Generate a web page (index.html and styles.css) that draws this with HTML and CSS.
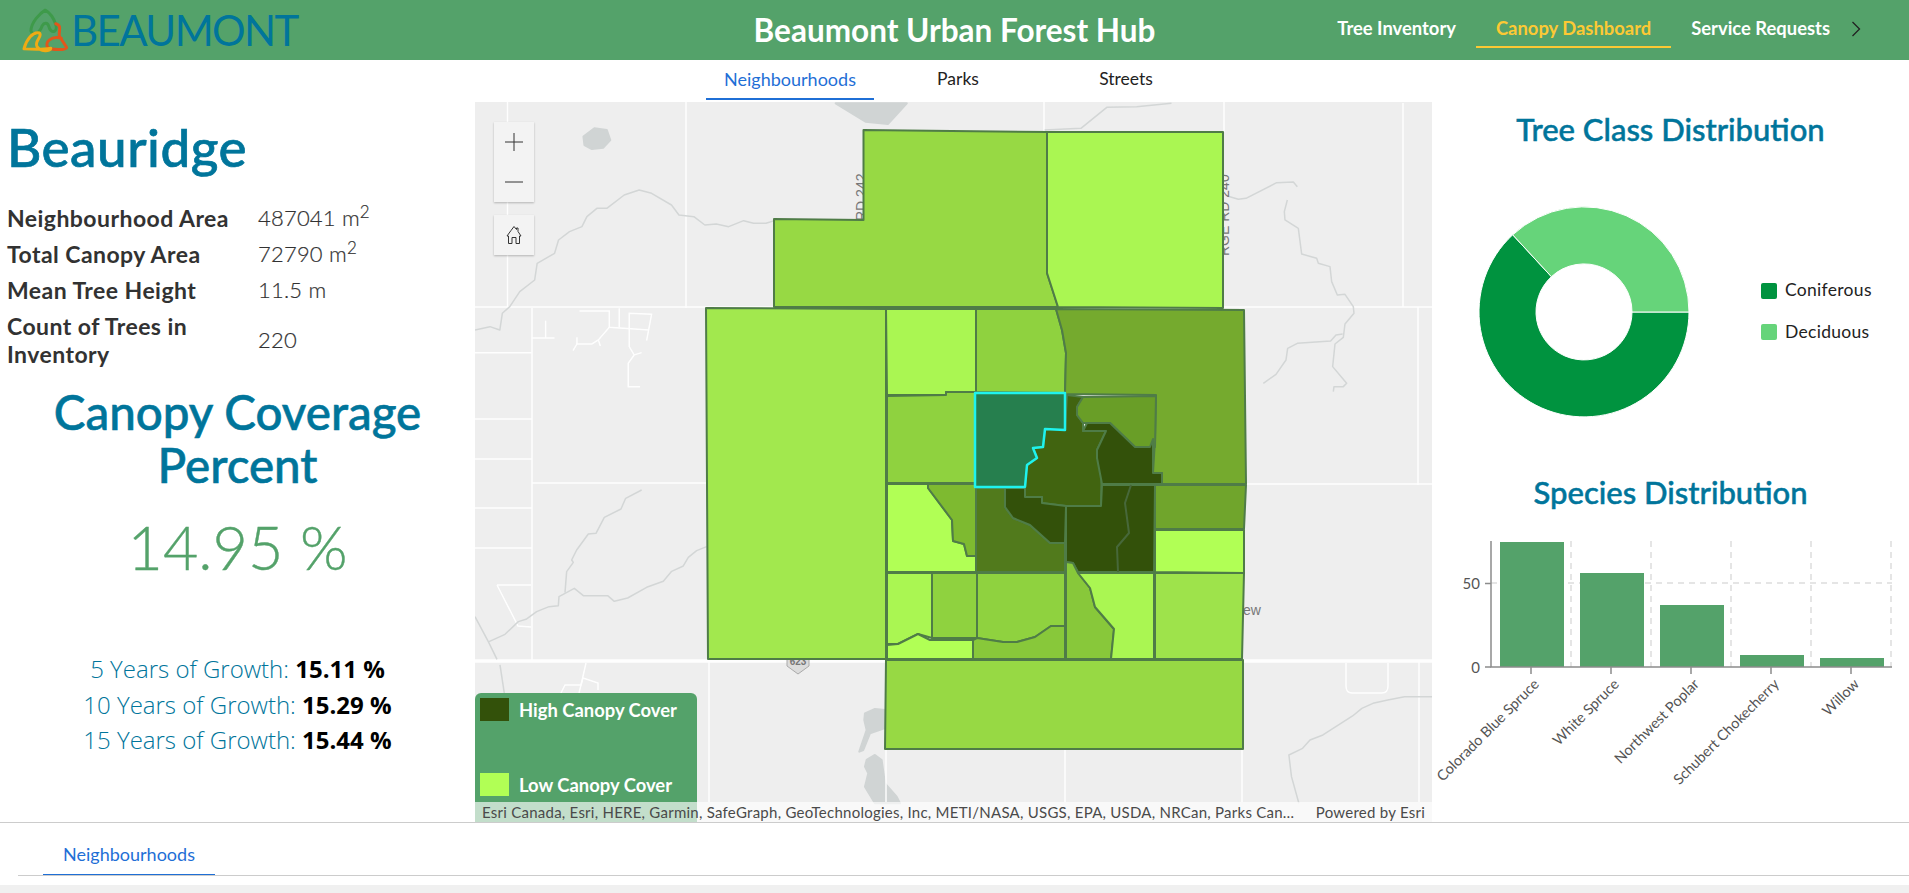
FILE: index.html
```html
<!DOCTYPE html>
<html lang="en">
<head>
<meta charset="utf-8">
<title>Beaumont Urban Forest Hub</title>
<link rel="stylesheet" href="styles.css">
</head>
<body>
<header class="topbar">
  <div class="brand">
    <svg class="brand-mark" viewBox="60 15 145 135" aria-hidden="true">
      <path class="lg" d="M133 21C118 30 90 58 90 84C96 100 116 92 124 68C130 58 140 58 144 70C150 95 172 88 165 64C158 44 146 28 133 21Z"/>
      <path class="lo" d="M165 62C186 68 172 86 176 100L198 134C196 142 152 142 141 134C130 118 152 98 182 106"/>
      <path class="ly" d="M69 138C76 110 96 84 116 90C126 100 100 114 108 130C118 148 150 146 150 136C140 138 100 140 69 138Z"/>
    </svg>
    <span class="brand-name">BEAUMONT</span>
  </div>
  <div class="app-title">Beaumont Urban Forest Hub</div>
  <nav class="mainnav">
    <a class="mainnav-item">Tree Inventory</a>
    <a class="mainnav-item is-current">Canopy Dashboard</a>
    <a class="mainnav-item">Service Requests</a>
    <svg class="chevron" viewBox="0 0 10 16" aria-hidden="true"><path d="M1.5 1L8.5 8L1.5 15"/></svg>
  </nav>
</header>

<div class="tabs">
  <a class="tab is-active">Neighbourhoods</a>
  <a class="tab">Parks</a>
  <a class="tab">Streets</a>
</div>

<main class="dash">
  <section class="left">
    <h1 class="area-name">Beauridge</h1>
    <dl class="facts">
      <dt>Neighbourhood Area</dt><dd>487041 m<sup>2</sup></dd>
      <dt>Total Canopy Area</dt><dd>72790 m<sup>2</sup></dd>
      <dt>Mean Tree Height</dt><dd>11.5 m</dd>
      <dt>Count of Trees in Inventory</dt><dd>220</dd>
    </dl>
    <h2 class="cov-title">Canopy Coverage Percent</h2>
    <div class="cov-value">14.95 %</div>
    <ul class="growth">
      <li>5 Years of Growth: <b>15.11 %</b></li>
      <li>10 Years of Growth: <b>15.29 %</b></li>
      <li>15 Years of Growth: <b>15.44 %</b></li>
    </ul>
  </section>

  <section class="map">
    <svg class="map-canvas" viewBox="475 102 957 720" aria-label="Map of neighbourhood canopy cover">
      <g class="lake">
        <g transform="translate(470 100) scale(.4975 .3333)">
          <polygon points="735,10 795,65 840,72 878,10"/>
          <polygon points="228,110 250,85 275,90 282,120 268,143 245,147 230,135"/>
        </g>
        <g transform="translate(470 560) scale(.3333)">
          <polygon points="1185,460 1215,447 1245,450 1243,505 1200,520 1180,570 1168,575 1190,510 1183,480"/>
          <polygon points="1190,600 1215,585 1235,600 1245,670 1280,710 1290,730 1215,730 1185,680 1195,640 1185,620"/>
        </g>
      </g>
      <g class="road">
        <line x1="507.5" y1="102" x2="507.5" y2="308"/>
        <line x1="686" y1="102" x2="686" y2="308"/>
        <line x1="1044" y1="102" x2="1044" y2="132"/>
        <line x1="1224" y1="102" x2="1224" y2="132"/>
        <line x1="475" y1="307" x2="1432" y2="307"/>
        <line x1="532" y1="308" x2="532" y2="660"/>
        <line x1="475" y1="419" x2="532" y2="419"/>
        <line x1="475" y1="459" x2="532" y2="459"/>
        <line x1="475" y1="508" x2="532" y2="508"/>
        <line x1="475" y1="548" x2="532" y2="548"/>
        <line x1="532" y1="483" x2="708" y2="483"/>
        <line x1="709" y1="662" x2="709" y2="802"/>
        <line x1="1065" y1="750" x2="1065" y2="802"/>
        <line x1="1242" y1="750" x2="1242" y2="802"/>
        <line x1="886" y1="750" x2="886" y2="802"/>
        <line x1="1419" y1="662" x2="1419" y2="802"/>
        <line x1="1403" y1="103" x2="1403" y2="307"/>
        <line x1="1418" y1="307" x2="1418" y2="485"/>
        <line x1="1245" y1="484" x2="1432" y2="484"/>
        <polyline points="497,585 531,585"/>
        <polyline points="531,627 518,626 497,585"/>
        <polyline points="586,663 581,685 579,693"/>
        <polyline points="561,693 565,685 581,685 583,678 598,683 598,690"/>
        <path d="M1346 663V686Q1346 693 1352 693H1382Q1388 693 1388 686V663"/>
        <g transform="translate(470 100) scale(.4975 .3333)">
          <polyline points="220,633 280,633 280,682 360,690"/>
          <polyline points="300,625 300,682"/>
          <polyline points="355,722 365,643 320,640 320,740 330,765 345,758"/>
          <polyline points="330,765 318,790 318,860 342,860"/>
          <polyline points="280,682 258,720 245,732 215,732 207,752"/>
          <polyline points="215,732 215,712"/>
          <polyline points="258,720 262,738"/>
          <polyline points="124,714 170,714"/>
          <polyline points="152,662 152,714"/>
          <polyline points="10,758 124,758"/>
        </g>
        <line class="road-major" x1="475" y1="661" x2="1432" y2="661"/>
      </g>
      <g class="river">
        <g transform="translate(470 100) scale(.4975 .3333)">
          <polyline points="10,690 40,680 60,690 65,640 80,620 100,575 130,540 135,490 170,460 178,420 200,395 225,380 235,350 255,325 275,325 310,285 340,270 365,280 405,315 420,345 450,350 472,375 495,372 520,380 550,362 570,370 595,370 612,362"/>
          <polyline points="1155,90 1228,85 1280,22 1340,20 1410,10"/>
        </g>
        <g transform="translate(475 400) scale(.3333)">
          <polyline points="500,270 452,295 438,327 388,352 363,400 340,402 305,450 290,480 295,487 275,515 270,578"/>
          <polyline points="42,725 90,703 130,665 155,657 185,635 222,620 250,617 252,590 298,565 325,587 398,587 418,604 458,594 515,562 565,544 590,514 625,498 640,472 665,452 695,440"/>
          <polyline points="0,650 40,725 66,778"/>
          <polyline points="75,795 88,880"/>
        </g>
        <g transform="translate(1220 100) scale(.3333)">
          <polyline points="22,288 55,298 78,295 170,248 220,246 232,260"/>
          <polyline points="202,300 193,335 195,360 235,385 245,462 290,475 295,490 330,500 335,545 352,585 375,583 400,620 402,640 375,672 370,712 345,732 338,800 380,850 370,860 342,860 340,875"/>
          <polyline points="130,850 168,823 198,780 203,745 232,730 332,723 348,705 368,702"/>
        </g>
        <g transform="translate(860 650) scale(.37037 .3333)">
          <polyline points="1185,460 1165,380 1158,315 1195,295 1215,270 1250,255 1330,198 1355,175 1385,160 1425,150 1470,140 1545,140"/>
        </g>
      </g>
      <g class="shield">
        <path d="M787 655H809V666L798 674L787 666Z"/>
        <text x="798" y="665">623</text>
      </g>
      <text class="map-label" transform="translate(866 221) rotate(-90)">RD 242</text>
      <text class="map-label" transform="translate(1229 256) rotate(-90)">RGE RD 240</text>
      <text class="map-label" x="1243" y="615">ew</text>

      <g class="nbhd">
        <polygon class="c-3" points="863.5,130 1047.6,132 1047,273 1058,307 774,307 774,219 863.5,220"/>
        <polygon class="c-0" points="1047,132 1223,132 1223,308 1058,307 1047,273"/>
        <polygon class="c-2" points="706,308 886,309 886,659 708,659"/>
        <polygon class="c-0" points="886,309 976,309 976,392 946,392 946,395 887,395"/>
        <polygon class="c-4" points="976,309 1056,309 1062,330 1066,353 1065,393 976,392"/>
        <polygon class="c-6" points="1056,309 1244,310 1246,484 1162,484 1162,473 1153,473 1155,440 1156,395 1065,394 1066,353 1062,330"/>
        <polygon class="c-4" points="887,396 946,395 946,392 976,392 976,483 887,483"/>
        <polygon class="c-9" points="1067,395 1083,397 1077,407 1077,415 1083,423 1083,431 1106,431 1097,450 1097,458 1102,459 1101,506 1066,506 1042,503 1042,497 1025,497 1025,487 1027,465 1037,458 1033,448 1043,447 1045,429 1065,430"/>
        <polygon class="c-7" points="1083,397 1156,396 1155,447 1135,447 1110,423 1087,423 1083,423 1077,415 1077,407"/>
        <polygon class="c-10" points="1087,423 1110,423 1135,447 1150,447 1153,439 1153,473 1162,473 1162,484 1102,484 1097,458 1097,450 1106,431 1083,431"/>
        <polygon class="c-6b" points="1155,485 1246,485 1244,529 1155,529"/>
        <polygon class="c-1" points="1155,530 1244,530 1244,573 1155,572"/>
        <polygon class="c-10" points="1066,506 1101,506 1102,485 1155,485 1154,572 1078,572 1073,563 1066,562"/>
        <polyline class="seam" points="1131,485 1125,503 1129,533 1117,547 1118,572"/>
        <polygon class="c-8" points="976,488 1005,488 1005,507 1013,518 1030,525 1050,543 1065,543 1065,572 976,572"/>
        <polygon class="c-10" points="1005,488 1025,488 1025,497 1042,497 1042,503 1066,506 1065,543 1050,543 1030,525 1013,518 1005,507"/>
        <polygon class="c-1" points="887,484 928,484 928,488 952,520 953,541 964,544 967,556 976,556 976,572 887,572"/>
        <polygon class="c-5" points="928,484 976,484 976,556 967,556 964,544 953,541 952,520 928,488"/>
        <polygon class="c-0" points="887,573 932,573 932,638 918,634 910,638 898,644 887,644"/>
        <polygon class="c-4" points="932,573 977,573 977,638 932,638"/>
        <polygon class="c-4" points="977,573 1065,573 1065,626 1051,626 1035,637 1017,642 1003,642 977,638"/>
        <polygon class="c-1" points="887,645 898,644 910,638 918,634 930,640 973,640 973,659 887,659"/>
        <polygon class="c-4b" points="973,640 977,638 1003,642 1017,642 1035,637 1051,626 1065,626 1065,659 973,659"/>
        <polygon class="c-4b" points="1066,562 1073,563 1078,573 1090,588 1095,607 1114,629 1111,659 1066,659"/>
        <polygon class="c-0" points="1078,573 1154,573 1154,659 1111,659 1114,629 1095,607 1090,588"/>
        <polygon class="c-2b" points="1155,573 1244,573 1242,659 1155,659"/>
        <polygon class="c-3" points="886,660 1243,660 1243,749 885,749"/>
        <polygon class="selected" points="975,393 1065,393 1065,430 1045,429 1043,447 1033,448 1037,458 1027,465 1025,487 975,487"/>
      </g>
    </svg>

    <div class="map-tools">
      <div class="tool-group">
        <button class="tool"><svg viewBox="0 0 20 20"><path d="M10 1V19M1 10H19"/></svg></button>
        <button class="tool"><svg viewBox="0 0 20 20"><path d="M1 10H19"/></svg></button>
      </div>
      <div class="tool-group">
        <button class="tool"><svg viewBox="0 0 20 20"><path d="M10 1.5L12.5 4.5V3H14V6.5L17 11H15.5V18.5H12V12.5H8V18.5H4.500V11H3L7 5.500Z"/></svg></button>
      </div>
    </div>

    <div class="legend">
      <div class="legend-row"><span class="swatch swatch-high"></span>High Canopy Cover</div>
      <div class="legend-row"><span class="swatch swatch-low"></span>Low Canopy Cover</div>
    </div>

    <div class="attribution">
      <span class="attr-text">Esri Canada, Esri, HERE, Garmin, SafeGraph, GeoTechnologies, Inc, METI/NASA, USGS, EPA, USDA, NRCan, Parks Can…</span>
      <span class="attr-power">Powered by Esri</span>
    </div>
  </section>

  <section class="right">
    <h2 class="chart-title chart-title-first">Tree Class Distribution</h2>
    <svg class="donut" viewBox="1432 149 477 323" aria-label="Tree class donut chart">
      <path class="slice-con" d="M1689 312A105 105 0 1 1 1512.700 234.800L1551.400 276.700A48 48 0 1 0 1632 312Z"/>
      <path class="slice-dec" d="M1689 312A105 105 0 0 0 1512.700 234.800L1551.400 276.700A48 48 0 0 1 1632 312Z"/>
      <rect class="key-con" x="1761" y="283" width="16" height="16" rx="2"/>
      <text class="key-text" x="1785" y="296">Coniferous</text>
      <rect class="key-dec" x="1761" y="324" width="16" height="16" rx="2"/>
      <text class="key-text" x="1785" y="338">Deciduous</text>
    </svg>
    <h2 class="chart-title">Species Distribution</h2>
    <svg class="bars" viewBox="1432 512 477 310" aria-label="Species bar chart">
      <g class="grid">
        <line x1="1491" y1="583" x2="1892" y2="583"/>
        <line x1="1571" y1="541" x2="1571" y2="667"/>
        <line x1="1651" y1="541" x2="1651" y2="667"/>
        <line x1="1731" y1="541" x2="1731" y2="667"/>
        <line x1="1811" y1="541" x2="1811" y2="667"/>
        <line x1="1891" y1="541" x2="1891" y2="667"/>
      </g>
      <g class="bar">
        <rect x="1500" y="542" width="64" height="125"/>
        <rect x="1580" y="573" width="64" height="94"/>
        <rect x="1660" y="605" width="64" height="62"/>
        <rect x="1740" y="655" width="64" height="12"/>
        <rect x="1820" y="658" width="64" height="9"/>
      </g>
      <g class="axis">
        <path d="M1491 541V667H1892"/>
        <path d="M1485 583.500H1491M1485 667H1491"/>
        <path d="M1531 667V674M1611 667V674M1691 667V674M1771 667V674M1851 667V674"/>
      </g>
      <text class="tick-y" x="1480" y="589">50</text>
      <text class="tick-y" x="1480" y="673">0</text>
      <text class="tick-x" transform="translate(1540 685) rotate(-45)">Colorado Blue Spruce</text>
      <text class="tick-x" transform="translate(1620 685) rotate(-45)">White Spruce</text>
      <text class="tick-x" transform="translate(1700 685) rotate(-45)">Northwest Poplar</text>
      <text class="tick-x" transform="translate(1780 685) rotate(-45)">Schubert Chokecherry</text>
      <text class="tick-x" transform="translate(1860 685) rotate(-45)">Willow</text>
    </svg>
  </section>
</main>

<footer class="subtabs">
  <a class="subtab">Neighbourhoods</a>
</footer>
<div class="pagefoot"></div>
</body>
</html>
```
FILE: styles.css
```css
* { box-sizing: border-box; }
html, body { margin: 0; padding: 0; }
body {
  height: 893px;
  overflow: hidden;
  background: #fff;
  color: #323232;
  font-family: Lato, "Noto Sans", sans-serif;
  display: flex;
  flex-direction: column;
}

/* header */
.topbar {
  height: 60px;
  flex: none;
  background: #54a26a;
  display: grid;
  grid-template-columns: 1fr auto 1fr;
  align-items: center;
}
.brand { display: flex; align-items: center; padding-left: 21px; }
.brand-mark { width: 48px; height: 45px; fill: none; stroke-width: 9; stroke-linejoin: round; stroke-linecap: round; }
.lg { stroke: #3e9a4a; }
.lo { stroke: #e2561b; }
.ly { stroke: #f0ab14; }
.brand-name { font-size: 42px; line-height: 60px; color: #00759b; margin-left: 2px; letter-spacing: -1.600px; }
.app-title { font-size: 31.500px; font-weight: 700; color: #fff; }
.mainnav { display: flex; justify-content: flex-end; align-items: flex-start; height: 60px; padding-right: 48px; }
.mainnav-item {
  height: 48px;
  padding: 0 20px;
  line-height: 56px;
  font-size: 18.400px;
  font-weight: 700;
  color: #fff;
  white-space: nowrap;
  border-bottom: 2px solid transparent;
}
.mainnav-item.is-current { color: #fcc934; border-bottom-color: #fcc934; }
.chevron { width: 10px; height: 16px; margin: 21px 0 0 1px; fill: none; stroke: #222; stroke-width: 1.3; }

/* tabs */
.tabs { height: 42px; flex: none; display: flex; justify-content: center; padding-left: 7px; }
.tab { width: 168px; height: 40px; text-align: center; font-size: 17.500px; line-height: 38px; color: #222; border-bottom: 2px solid transparent; }
.tab.is-active { font-size: 18px; color: #1f6fd6; border-bottom-color: #1f6fd6; }

/* dashboard grid */
.dash { height: 720px; flex: none; display: grid; grid-template-columns: 475px 957px 477px; }

.left { display: flex; flex-direction: column; }
.area-name { margin: 15px 0 0; padding-left: 7px; font-size: 53px; line-height: 60px; font-weight: 500; color: #00759b; letter-spacing: .5px; -webkit-text-stroke: .7px #00759b; }
.facts {
  margin: 23px 0 0;
  padding-left: 7px;
  display: grid;
  grid-template-columns: 251px 1fr;
  align-items: center;
  font-size: 23px;
  line-height: 28px;
  letter-spacing: .45px;
}
.facts dt { font-weight: 700; padding: 4px 0; width: 240px; color: #323232; }
.facts dd { margin: 0; font-size: 22px; font-weight: 300; color: #323232; letter-spacing: .2px; -webkit-text-stroke: .2px #323232; }
.facts sup { font-size: 17px; line-height: 0; }
.cov-title { margin: 13px auto 0; width: 420px; text-align: center; font-size: 47.500px; line-height: 53px; font-weight: 500; color: #00759b; -webkit-text-stroke: .6px #00759b; }
.cov-value { margin-top: 21px; text-align: center; font-size: 61px; line-height: 70px; font-weight: 300; color: #54a26a; -webkit-text-stroke: .4px #54a26a; }
.growth { list-style: none; margin: 69px 0 0; padding: 0; text-align: center; font-family: "Open Sans", sans-serif; font-size: 24px; font-weight: 300; line-height: 35.500px; color: #00759b; }
.growth b { color: #000; font-weight: 700; }

/* map */
.map { position: relative; background: #eee; overflow: hidden; }
.map-canvas { position: absolute; inset: 0; width: 957px; height: 720px; display: block; }
.map-canvas * { vector-effect: non-scaling-stroke; }
.lake polygon { fill: #d0d4d4; stroke: #d0d4d4; stroke-width: 2; stroke-linejoin: round; }
.road { fill: none; stroke: #fff; stroke-width: 1.500; opacity: .95; }
.road-major { stroke-width: 3.500; }
.river { fill: none; stroke: #d3d6d6; stroke-width: 1.500; stroke-linejoin: round; }
.shield path { fill: #dcdcdc; stroke: #aaa; }
.shield text { font: 700 10px "Liberation Sans", sans-serif; fill: #777; text-anchor: middle; }
.map-label { font: 400 14px "Liberation Sans", sans-serif; fill: #777; }
.nbhd polygon, .seam { stroke: #4f7c47; stroke-width: 2; stroke-linejoin: round; }
.seam { fill: none; stroke: #47683a; }
.c-0 { fill: #aaf652; }
.c-1 { fill: #b1ff55; }
.c-2 { fill: #a2e84e; }
.c-2b { fill: #9ee34b; }
.c-3 { fill: #97d944; }
.c-4 { fill: #8fd23f; }
.c-4b { fill: #88c83a; }
.c-5 { fill: #7eba30; }
.c-6 { fill: #75aa2e; }
.c-6b { fill: #70a52c; }
.c-7 { fill: #699e27; }
.c-8 { fill: #517a1c; }
.c-9 { fill: #416410; }
.c-10 { fill: #33510a; }
.nbhd .selected { fill: #267f4e; stroke: #1ff3ee; stroke-width: 2.500; }

.map-tools { position: absolute; left: 19px; top: 20px; display: flex; flex-direction: column; gap: 13px; }
.tool-group { display: flex; flex-direction: column; box-shadow: 0 1px 2px rgba(0,0,0,.25); }
.tool { width: 40px; height: 40px; padding: 0; border: 0; background: #f3f3f3; display: flex; align-items: center; justify-content: center; }
.tool svg { width: 20px; height: 20px; fill: none; stroke: #333; stroke-width: 1; }

.legend { position: absolute; left: 0; top: 591px; width: 222px; height: 129px; background: #54a26a; border-radius: 6px 6px 0 0; padding: 5px; display: flex; flex-direction: column; gap: 52px; }
.legend-row { display: flex; align-items: center; gap: 10px; height: 23px; font-size: 18.400px; font-weight: 700; color: #fff; white-space: nowrap; }
.swatch { width: 29px; height: 23px; flex: none; }
.swatch-high { background: #33510a; }
.swatch-low { background: #b1ff55; }

.attribution { position: absolute; left: 0; right: 0; bottom: 0; height: 20px; padding: 0 7px; display: flex; justify-content: space-between; align-items: center; background: rgba(255,255,255,.65); font-size: 15px; color: #4a4a4a; letter-spacing: .25px; white-space: nowrap; }

/* right column */
.right { display: flex; flex-direction: column; }
.chart-title { margin: 0; height: 40px; line-height: 40px; text-align: center; font-size: 31px; font-weight: 500; color: #00759b; -webkit-text-stroke: .5px #00759b; }
.chart-title-first { margin-top: 7px; }
.donut { width: 477px; height: 323px; display: block; }
.bars { width: 477px; height: 310px; display: block; }
.slice-con { fill: #00933f; stroke: #fff; }
.slice-dec { fill: #66d47a; stroke: #fff; }
.key-con { fill: #00933f; }
.key-dec { fill: #66d47a; }
.key-text { font-size: 17.500px; font-weight: 400; fill: #222; letter-spacing: .3px; }
.grid line { stroke: #ddd; stroke-width: 1.500; stroke-dasharray: 6 5; }
.bar rect { fill: #54a26a; }
.axis path { fill: none; stroke: #8c8c8c; stroke-width: 1.500; }
.tick-y { font-size: 15px; fill: #555; text-anchor: end; }
.tick-x { font-size: 14.500px; fill: #555; text-anchor: end; }

/* footer */
.subtabs { height: 63px; flex: none; border-top: 1px solid #ccc; padding: 0 0 0 18px; }
.subtab { display: block; width: 172px; margin-left: 25px; height: 53px; line-height: 63px; text-align: center; font-size: 18px; color: #1f6fd6; border-bottom: 2px solid #1f6fd6; }
.subtabs::after { content: ""; display: block; height: 1px; background: #ccc; margin-top: -1px; }
.pagefoot { flex: 1; background: #f0f0f0; }
```
